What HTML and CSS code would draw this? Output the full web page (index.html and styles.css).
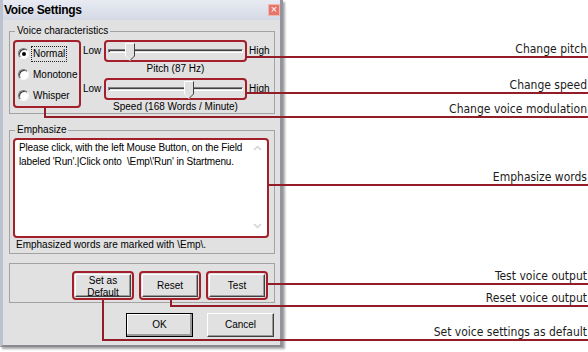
FILE: index.html
```html
<!DOCTYPE html>
<html lang="en">
<head>
    <meta charset="UTF-8">
    <title>Voice Settings</title>
    <link rel="stylesheet" href="styles.css">
</head>
<body>
<div class="page">
    <div class="window">
        <div class="titlebar">
            <span class="title">Voice Settings</span>
            <span class="close">&times;</span>
        </div>
        <div class="client">
            <fieldset class="group group-voice">
                <legend>Voice characteristics</legend>
                <div class="voice-row">
                    <div class="mark radios">
                        <label class="radio-row"><span class="radio checked"></span><span class="focus">Normal</span></label>
                        <label class="radio-row"><span class="radio"></span><span>Monotone</span></label>
                        <label class="radio-row"><span class="radio"></span><span>Whisper</span></label>
                    </div>
                    <div class="sliders">
                        <div class="slider-row">
                            <span>Low</span>
                            <div class="mark slider">
                                <div class="track"></div>
                                <svg class="thumb" style="left: 19px" width="10" height="18" viewBox="0 0 10 18"><path d="M0 0H10V13L5 18L0 13Z" fill="#e1e1e1"/><path d="M0.5 13V0.5H9.5" stroke="#fff" fill="none"/><path d="M9.5 0.5V13L5 17.5" stroke="#404040" fill="none"/><path d="M0.5 13L5 17.5" stroke="#f4f4f4" fill="none"/></svg>
                            </div>
                            <span class="high">High</span>
                        </div>
                        <div class="slider-caption">Pitch (87 Hz)</div>
                        <div class="slider-row second">
                            <span>Low</span>
                            <div class="mark slider">
                                <div class="track"></div>
                                <svg class="thumb" style="left: 78px" width="10" height="18" viewBox="0 0 10 18"><path d="M0 0H10V13L5 18L0 13Z" fill="#e1e1e1"/><path d="M0.5 13V0.5H9.5" stroke="#fff" fill="none"/><path d="M9.5 0.5V13L5 17.5" stroke="#404040" fill="none"/><path d="M0.5 13L5 17.5" stroke="#f4f4f4" fill="none"/></svg>
                            </div>
                            <span class="high">High</span>
                        </div>
                        <div class="slider-caption">Speed (168 Words / Minute)</div>
                    </div>
                </div>
            </fieldset>

            <fieldset class="group group-emphasize">
                <legend>Emphasize</legend>
                <div class="mark textbox">
                    <div class="textbox-text">Please click, with the left Mouse Button, on the Field<br>labeled 'Run'.|Click onto  \Emp\'Run' in Startmenu.</div>
                    <div class="scroll">
                        <svg width="9" height="6" viewBox="0 0 9 6"><path d="M1 5L4.5 1.5L8 5" stroke="#d2d2d2" stroke-width="1.5" fill="none"/></svg>
                        <svg width="9" height="6" viewBox="0 0 9 6"><path d="M1 1L4.5 4.5L8 1" stroke="#d2d2d2" stroke-width="1.5" fill="none"/></svg>
                    </div>
                </div>
                <div class="hint">Emphasized words are marked with \Emp\.</div>
            </fieldset>

            <fieldset class="group group-actions">
                <div class="mark action"><button class="btn">Set as<br>Default</button></div>
                <div class="mark action"><button class="btn">Reset</button></div>
                <div class="mark action"><button class="btn">Test</button></div>
            </fieldset>

            <div class="dialog-buttons">
                <button class="btn btn-dialog btn-default">OK</button>
                <button class="btn btn-dialog">Cancel</button>
            </div>
        </div>
    </div>

    <div class="callouts">
        <div class="callout">Change pitch</div>
        <div class="callout callout-speed">Change speed</div>
        <div class="callout callout-modulation">Change voice modulation</div>
        <div class="callout callout-emphasize">Emphasize words</div>
        <div class="callout callout-test">Test voice output</div>
        <div class="callout callout-reset">Reset voice output</div>
        <div class="callout callout-default">Set voice settings as default</div>
    </div>

    <!-- leader lines from the marked controls to their captions -->
    <svg class="leaders" width="588" height="352" viewBox="0 0 588 352">
        <g fill="none" stroke="#921c27" stroke-width="2">
            <path d="M246 57H588"/>
            <path d="M246 93H588"/>
            <path d="M45 108V117H588"/>
            <path d="M268 185H588"/>
            <path d="M268 284H588"/>
            <path d="M171 300V306H588"/>
            <path d="M103 300V340H588"/>
        </g>
    </svg>
</div>
</body>
</html>
```

FILE: styles.css
```css
body {
    margin: 0;
    background-color: white;
    font-family: "Liberation Sans", Arial, sans-serif;
}

.page {
    position: relative;
    display: flex;
    width: 588px;
    height: 352px;
    overflow: hidden;
}

/* dialog window */

.window {
    width: 283px;
    height: 347px;
    box-sizing: border-box;
    background-color: #e1e1e1;
    border-left: 3px solid #bcc1cf;
    border-right: 3px solid #94949c;
    border-bottom: 2px solid #8a8a92;
    box-shadow: 2px 2px 2px rgba(0, 0, 0, 0.35);
    font-size: 10px;
    line-height: 12px;
    color: black;
}

.titlebar {
    height: 20px;
    display: flex;
    align-items: center;
    justify-content: space-between;
    padding-left: 1px;
    background: linear-gradient(#e8ebf2, #d4d9e5);
}

.title {
    font-weight: bold;
    font-size: 12px;
    letter-spacing: -0.3px;
}

.close {
    width: 12px;
    height: 12px;
    box-sizing: border-box;
    border: 1px solid #f2b6ae;
    background-color: #e4766b;
    color: white;
    font-size: 11px;
    line-height: 9px;
    text-align: center;
}

.client {
    padding: 5px 5px 0 6px;
}

.group {
    width: 266px;
    box-sizing: border-box;
    margin: 0;
    border: 1px solid #a3a3a3;
    min-inline-size: 0;
}

.group legend {
    padding: 0 2px;
    margin-left: 2px;
    line-height: 12px;
}

.mark {
    border: 2px solid #a31f2b;
    border-radius: 4px;
}

/* voice characteristics */

.group-voice {
    padding: 3px 0 0 3px;
}

.voice-row {
    display: flex;
    align-items: flex-start;
}

.radios {
    width: 68px;
    box-sizing: border-box;
    padding: 1px 0 0 3px;
}

.radio-row {
    height: 21px;
    display: flex;
    align-items: center;
    gap: 4px;
}

.radio {
    position: relative;
    width: 11px;
    height: 11px;
    box-sizing: border-box;
    border-radius: 50%;
    border: 1px solid;
    border-color: #7a7a7a #f8f8f8 #f8f8f8 #7a7a7a;
    background-color: white;
    box-shadow: inset 1px 1px 0 #3c3c3c;
}

.radio.checked::after {
    content: "";
    position: absolute;
    left: 2.5px;
    top: 2.5px;
    width: 4px;
    height: 4px;
    border-radius: 50%;
    background-color: black;
}

.focus {
    outline: 1px dotted #222;
    outline-offset: 1px;
}

.sliders {
    margin-left: 2px;
}

.slider-row {
    display: grid;
    grid-template-columns: 21px 143px auto;
    align-items: center;
}

.slider-row.second {
    margin-top: 3px;
}

.slider {
    position: relative;
    height: 22px;
    box-sizing: border-box;
}

.track {
    height: 4px;
    box-sizing: border-box;
    margin: 7px 2px 0;
    border: 1px solid;
    border-color: #808080 white white #808080;
    box-shadow: inset 1px 1px 0 #404040;
}

.thumb {
    position: absolute;
    top: 1px;
}

.high {
    padding-left: 2px;
}

.slider-caption {
    width: 143px;
    margin: 1px 0 0 21px;
    text-align: center;
}

/* emphasize */

.group-emphasize {
    margin-top: 10px;
    padding: 2px 0 2px 3px;
}

.textbox {
    width: 256px;
    height: 100px;
    box-sizing: border-box;
    display: flex;
    background-color: white;
}

.textbox-text {
    flex: 1;
    min-width: 0;
    padding: 1px 4px;
    line-height: 14px;
    letter-spacing: -0.15px;
    white-space: pre;
}

.scroll {
    width: 14px;
    display: flex;
    flex-direction: column;
    justify-content: space-between;
    padding: 5px 0 7px;
}

.hint {
    margin-top: 1px;
    padding-left: 3px;
}

/* buttons */

.group-actions {
    margin-top: 9px;
    padding: 7px 6px 2px 0;
    display: flex;
    justify-content: flex-end;
    gap: 5px;
}

.action {
    width: 62px;
    height: 29px;
    box-sizing: border-box;
    padding: 1px;
}

.btn {
    width: 100%;
    height: 100%;
    padding: 0;
    font: inherit;
    line-height: 12px;
    color: black;
    background-color: #e1e1e1;
    border: 1px solid;
    border-color: white #404040 #404040 white;
    box-shadow: inset -1px -1px 0 #9a9a9a;
}

.dialog-buttons {
    display: flex;
    justify-content: flex-end;
    gap: 14px;
    margin-top: 10px;
    padding-right: 1px;
}

.btn-dialog {
    width: 67px;
    height: 24px;
}

.btn-default {
    outline: 1px solid black;
    outline-offset: -1px;
    box-shadow: inset -2px -2px 0 #9a9a9a, inset 1px 1px 0 white;
}

/* captions on the right */

.callouts {
    flex: 1;
    display: flex;
    flex-direction: column;
    align-items: flex-end;
    padding: 42px 1px 0 0;
    font-family: "DejaVu Sans", Verdana, sans-serif;
    font-stretch: condensed;
    font-size: 12px;
    line-height: 14px;
    color: #1c1c1c;
}

.callout-speed { margin-top: 22px; }
.callout-modulation { margin-top: 10px; }
.callout-emphasize { margin-top: 54px; }
.callout-test { margin-top: 85px; }
.callout-reset { margin-top: 8px; }
.callout-default { margin-top: 20px; }

.leaders {
    position: absolute;
    left: 0;
    top: 0;
    pointer-events: none;
}
```
